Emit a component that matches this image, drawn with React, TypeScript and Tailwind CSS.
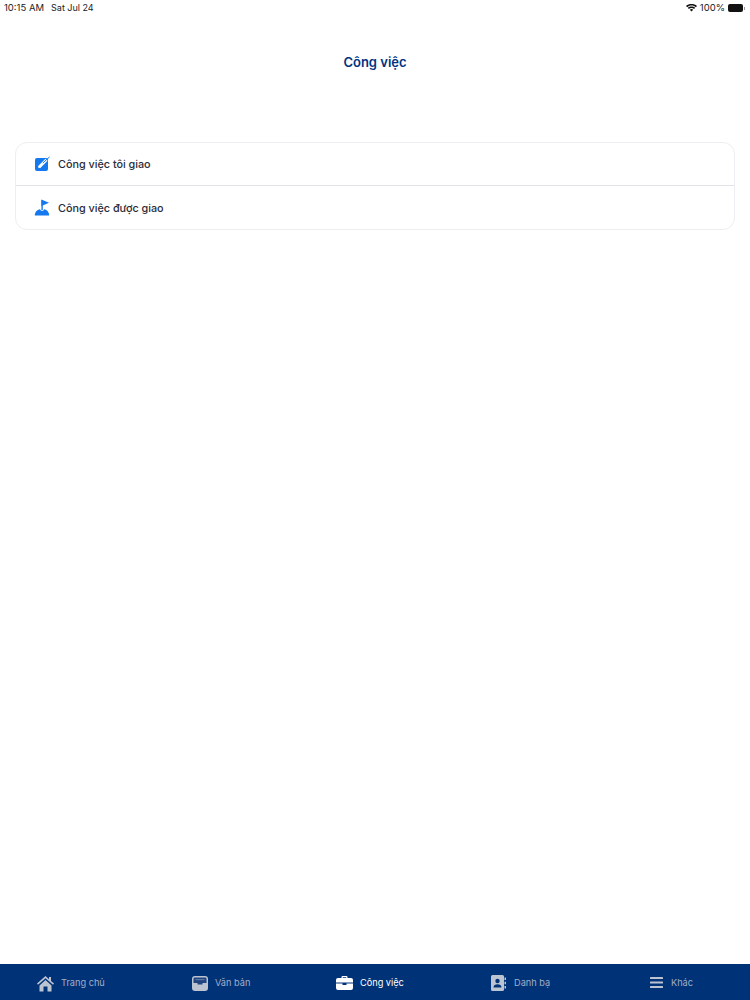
const font = "font-['Inter','Liberation_Sans',sans-serif]";

function StatusBar() {
  return (
    <div className="flex h-[14px] items-center justify-between pl-[4px] pr-[5px] pt-[2px] font-['Inter',sans-serif] text-[9.5px] text-[#1c1c1e]">
      <div className="flex gap-[7px]">
        <span>10:15 AM</span>
        <span className="text-[9px]">Sat Jul 24</span>
      </div>
      <div className="flex items-center gap-[3px]">
        <svg width="11" height="8" viewBox="0 0 22 16" fill="#111">
          <path d="M11 3c3.400 0 6.400 1.300 8.700 3.400L22 4C19 1.200 15.200 0 11 0S3 1.200 0 4l2.300 2.400C4.600 4.300 7.600 3 11 3z" />
          <path d="M11 8c2 0 3.800.8 5.200 2l2.200-2.400C16.400 5.900 13.800 5 11 5S5.600 5.900 3.600 7.600L5.800 10C7.200 8.800 9 8 11 8z" />
          <path d="M11 10c-1.300 0-2.400.5-3.300 1.300L11 15l3.300-3.700C13.400 10.500 12.300 10 11 10z" />
        </svg>
        <span>100%</span>
        <div className="flex items-center">
          <div className="h-[8px] w-[15px] rounded-[2px] bg-[#111]" />
          <div className="ml-[1px] h-[3px] w-[1px] bg-[#999]" />
        </div>
      </div>
    </div>
  );
}

function PencilIcon() {
  return (
    <svg width="16" height="16" viewBox="0 0 16 16">
      <rect x="1" y="2" width="13" height="13" rx="2" fill="#1478ee" />
      <path d="M5 11.300 12.500 3.800" stroke="#fff" strokeWidth="3" />
      <path d="M4 12.300 5.500 8.800 7.500 10.800z" fill="#fff" />
      <path d="M8.800 7 15.600.9" stroke="#1478ee" strokeWidth="1" />
    </svg>
  );
}

function FlagIcon() {
  return (
    <svg width="16" height="17" viewBox="0 0 16 17" fill="#1478ee">
      <path d="M7.400 1h1.400v10H7.400z" />
      <path d="M7.400.6 15 3.700 7.400 7z" />
      <path d="M.800 16.500C.800 13 3 10.700 6.100 10.200c.3 1 1 1.500 2 1.500s1.700-.5 2-1.500c2.900.5 5.100 2.800 5.100 6.300z" />
    </svg>
  );
}

function HomeIcon() {
  return (
    <svg width="17" height="17" viewBox="0 0 17 17" fill="#bcc4d2">
      <path d="M8.500 1 0 8.500l1 1.200L8.500 3.200 16 9.700l1-1.200-3-2.600V2h-2v2.200z" />
      <path d="M2.500 10.500 8.500 5l6 5.500V16.500h-4v-5h-4v5h-4z" />
    </svg>
  );
}

function TrayIcon() {
  return (
    <svg width="16" height="15" viewBox="0 0 16 15">
      <path d="M3 0h10a3 3 0 0 1 3 3v9a3 3 0 0 1-3 3H3a3 3 0 0 1-3-3V3a3 3 0 0 1 3-3z" fill="#bcc4d2" />
      <path d="M2.800 1.500h10.400a1.300 1.300 0 0 1 1.300 1.300V7h-4v1.500h-5V7h-4V2.800a1.300 1.300 0 0 1 1.300-1.300z" fill="#1f4480" />
      <path d="M3.500 3h9v1.200h-9z" fill="#5d77a3" />
    </svg>
  );
}

function BriefcaseIcon() {
  return (
    <svg width="17" height="14" viewBox="0 0 17 14" fill="#fff">
      <path d="M5.500 2V1a1 1 0 0 1 1-1h4a1 1 0 0 1 1 1v1H15a2 2 0 0 1 2 2v2.500H0V4a2 2 0 0 1 2-2zm1.200 0h3.600V1.200H6.700z" fillRule="evenodd" clipRule="evenodd" />
      <path d="M0 7.500h6.500V9h4V7.500H17V12a2 2 0 0 1-2 2H2a2 2 0 0 1-2-2z" />
    </svg>
  );
}

function ContactIcon() {
  return (
    <svg width="15" height="16" viewBox="0 0 15 16">
      <path d="M1.500 0h10A1.500 1.500 0 0 1 13 1.500v13a1.500 1.500 0 0 1-1.500 1.500h-10A1.500 1.500 0 0 1 0 14.500v-13A1.500 1.500 0 0 1 1.500 0z" fill="#bcc4d2" />
      <path d="M13.500 2.500H15v2.500h-1.500zM13.500 6.700H15v2.500h-1.500zM13.500 11H15v2.500h-1.500z" fill="#bcc4d2" />
      <circle cx="6.500" cy="6" r="2.200" fill="#003278" />
      <path d="M2.500 12.500c0-2 1.800-3.200 4-3.200s4 1.200 4 3.200z" fill="#003278" />
    </svg>
  );
}

function MenuIcon() {
  return (
    <svg width="13" height="11" viewBox="0 0 13 11" fill="#bcc4d2">
      <rect width="13" height="2" y="0" rx="0.500" />
      <rect width="13" height="2" y="4.500" rx="0.500" />
      <rect width="13" height="2" y="9" rx="0.500" />
    </svg>
  );
}

const tabs = [
  { label: 'Trang chủ', icon: <HomeIcon />, width: 'w-[154px] pl-[37px]', gap: 'gap-[7px]' },
  { label: 'Văn bản', icon: <TrayIcon />, width: 'w-[144px] pl-[38px]', gap: 'gap-[7px]' },
  { label: 'Công việc', icon: <BriefcaseIcon />, active: true, width: 'w-[155px] pl-[38px]', gap: 'gap-[7px]' },
  { label: 'Danh bạ', icon: <ContactIcon />, width: 'w-[158px] pl-[38px]', gap: 'gap-[8px]' },
  { label: 'Khác', icon: <MenuIcon />, width: 'flex-1 pl-[39px]', gap: 'gap-[8px]' },
];

export default function App() {
  return (
    <div className={`flex h-[1000px] w-[750px] flex-col overflow-hidden bg-white ${font}`}>
      <StatusBar />
      <h1 className="mt-[33px] text-center text-[13px] leading-[30px] font-semibold text-[#00337f]">Công việc</h1>

      <div className="mx-[15px] mt-[65px] rounded-[12px] border border-[#eeeef2] bg-white">
        <div className="flex h-[43px] items-center gap-[8px] border-b border-[#e4e4e8] pl-[18px] text-[10.800px] font-medium text-[#2a2c3a]">
          <PencilIcon />
          <span className="pt-[3px]">Công việc tôi giao</span>
        </div>
        <div className="flex h-[43px] items-center gap-[8px] pl-[18px] text-[10.800px] font-medium text-[#2a2c3a]">
          <FlagIcon />
          <span className="pt-[3px]">Công việc được giao</span>
        </div>
      </div>

      <div className="mt-auto flex h-[36px] items-center bg-[#003278] pt-[2px] text-[9.200px]">
        {tabs.map((tab) => (
          <div key={tab.label} className={`flex items-center ${tab.width} ${tab.gap}`}>
            {tab.icon}
            <span className={tab.active ? 'text-white' : 'text-[#a0aec6]'}>{tab.label}</span>
          </div>
        ))}
      </div>
    </div>
  );
}
